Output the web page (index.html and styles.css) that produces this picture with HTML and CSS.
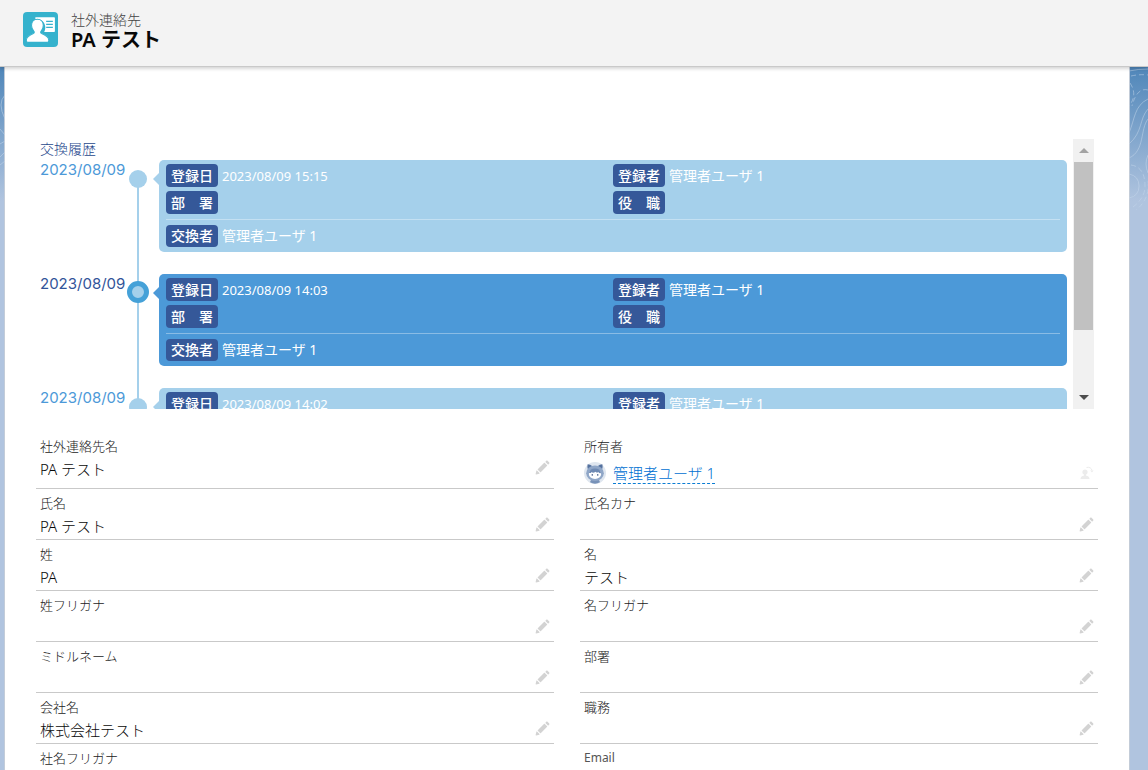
FILE: index.html
```html
<!DOCTYPE html>
<html lang="ja">
<head>
<meta charset="utf-8">
<meta name="viewport" content="width=device-width, initial-scale=1">
<title>PA テスト | 社外連絡先</title>
<link rel="stylesheet" href="styles.css">
</head>
<body>
<svg class="defs" aria-hidden="true">
  <symbol id="pencil" viewBox="0 0 52 52"><path d="M9.5 33.4l8.9 8.9c.4.4 1 .4 1.4 0L42 20c.4-.4.4-1 0-1.4l-8.8-8.8c-.4-.4-1-.4-1.4 0L9.5 32.1c-.4.4-.4 1 0 1.3zM36.1 5.7c-.4.4-.4 1 0 1.4l8.8 8.8c.4.4 1 .4 1.4 0l2.5-2.5c1.6-1.5 1.6-3.9 0-5.5l-4.7-4.7c-1.6-1.6-4.1-1.6-5.7 0l-2.3 2.5zM2.1 48.2c-.2 1 .7 1.9 1.7 1.7l10.9-2.6c.4-.1.7-.3.9-.5l.2-.2c.2-.2.3-.9-.1-1.3l-9-9c-.4-.4-1.1-.3-1.3-.1l-.2.2c-.3.3-.4.6-.5.9L2.1 48.2z"/></symbol>
</svg>
<header class="page-header">
  <svg class="record-icon" viewBox="0 0 34 34" aria-hidden="true">
    <rect width="34" height="34" rx="4" fill="#35b2cd"/>
    <path fill="#fff" d="M12 5h18c.6 0 1 .4 1 1v12.500c0 .6-.4 1-1 1h-9.500c1-2 1.500-4 1-6-.5-3.500-3-6-6.500-6.500H12z"/>
    <path stroke="#35b2cd" stroke-width="1.200" d="M22.500 9h6.500M22.500 12h6.500M22.500 15h6.500"/>
    <path fill="#fff" stroke="#35b2cd" d="M14 7c3.500 0 5.700 2.700 5.700 6.200 0 2.300-.9 4.200-2.200 5.600-.6.700-.4 1.800.6 2.200 3.600 1.500 6.900 3 7 6.500.1 1.200-.8 2-2 2H5.200c-1.200 0-2.100-.8-2-2 .2-3.500 3.300-5 6.800-6.500 1-.4 1.200-1.500.6-2.200-1.300-1.400-2.300-3.300-2.300-5.600C8.300 9.700 10.500 7 14 7z"/>
  </svg>
  <div>
    <p class="record-type">社外連絡先</p>
    <h1 class="record-name">PA テスト</h1>
  </div>
</header>
<div class="stage">
  <svg class="contours contours-left" viewBox="0 0 5 140" aria-hidden="true">
    <path d="M5 28q-8 8 0 24M0 62l5 6M0 77l5-3M0 90l5-5M0 98l5-4"/>
  </svg>
  <svg class="contours contours-right" viewBox="0 0 19 150" aria-hidden="true">
    <path d="M0 4q9-2 19-2M0 66C6 52 5 39 19 32M0 77C14 65 10 52 19 42M0 91C16 84 11 62 19 52M0 107q10 2 10 12t-10 12M19 88q-4 9 0 18"/>
    <path stroke-dasharray="5 3" d="M2 9q9-2 17-1M1 16q8 12-1 23M19 23Q8 20 3 39M2 98q14 2 14 21 0 12-12 21M19 114q2 18-12 29"/>
  </svg>
  <main class="record">
    <section class="history" aria-label="交換履歴">
      <div class="history-view">
        <h2 class="history-title">交換履歴</h2>
        <ol class="timeline">
          <li class="event">
            <time class="event-date">2023/08/09</time><span class="rail"><span class="dot"></span></span>
            <article class="card">
              <div class="card-grid">
                <p class="pair"><span class="tag">登録日</span><span class="stamp">2023/08/09 15:15</span></p>
                <p class="pair"><span class="tag">登録者</span><span>管理者ユーザ 1</span></p>
                <p class="pair"><span class="tag">部　署</span></p>
                <p class="pair"><span class="tag">役　職</span></p>
              </div>
              <p class="pair exchanged"><span class="tag">交換者</span><span>管理者ユーザ 1</span></p>
            </article>
          </li>
          <li class="event event-active">
            <time class="event-date">2023/08/09</time><span class="rail"><span class="dot"></span></span>
            <article class="card">
              <div class="card-grid">
                <p class="pair"><span class="tag">登録日</span><span class="stamp">2023/08/09 14:03</span></p>
                <p class="pair"><span class="tag">登録者</span><span>管理者ユーザ 1</span></p>
                <p class="pair"><span class="tag">部　署</span></p>
                <p class="pair"><span class="tag">役　職</span></p>
              </div>
              <p class="pair exchanged"><span class="tag">交換者</span><span>管理者ユーザ 1</span></p>
            </article>
          </li>
          <li class="event">
            <time class="event-date">2023/08/09</time><span class="rail"><span class="dot"></span></span>
            <article class="card">
              <div class="card-grid">
                <p class="pair"><span class="tag">登録日</span><span class="stamp">2023/08/09 14:02</span></p>
                <p class="pair"><span class="tag">登録者</span><span>管理者ユーザ 1</span></p>
              </div>
            </article>
          </li>
        </ol>
      </div>
      <div class="scrollbar" aria-hidden="true">
        <span class="arrow arrow-up"></span>
        <span class="track"><span class="thumb"></span></span>
        <span class="arrow arrow-down"></span>
      </div>
    </section>
    <dl class="fields">
      <div class="field field-tall"><dt>社外連絡先名</dt><dd><span>PA テスト</span><button class="edit" aria-label="社外連絡先名を編集"><svg><use href="#pencil"/></svg></button></dd></div>
      <div class="field field-tall"><dt>所有者</dt><dd class="owner">
        <svg class="avatar" viewBox="0 0 20 20" aria-hidden="true">
          <circle cx="10" cy="10" r="10" fill="#dfe6ef"/>
          <path fill="#7892b8" d="M5.500 18.500Q6 15 10 15t4.500 3.500Q10 21 5.500 18.500z"/>
          <path fill="#54719e" d="M3.300 2q2.500 0 4 1.700h5.400Q14.200 2 16.700 2q.6 2.500-.3 5H3.600q-.9-2.500-.3-5z"/>
          <ellipse cx="10" cy="10.200" rx="8" ry="7" fill="#8fa6c7"/>
          <ellipse cx="10" cy="11" rx="5.600" ry="4.500" fill="#fff"/>
          <path fill="#6f8ab3" d="M4.500 10q1-4 5.500-4t5.500 4q-1.500.5-2.500-1-1 1.300-2.500-.2Q8 10.500 7 9q-1 1.400-2.500 1z"/>
          <path stroke="#46608b" d="M7.500 11v1.500M12.500 11v1.500"/>
        </svg>
        <a class="owner-link" href="#owner">管理者ユーザ 1</a>
        <button class="edit edit-owner" aria-label="所有者の変更"><svg viewBox="0 0 14 14"><circle cx="5" cy="6" r="2.600"/><path d="M4 7h2v2.500q3.500.7 3.500 3.500h-9Q.5 10.200 4 9.500z"/><path class="swap" d="M6.500 1.500Q11 .500 12 4.500"/><path d="M10.200 4.500h3.400L12 6.600z"/></svg></button></dd></div>
      <div class="field"><dt>氏名</dt><dd><span>PA テスト</span><button class="edit" aria-label="氏名を編集"><svg><use href="#pencil"/></svg></button></dd></div>
      <div class="field"><dt>氏名カナ</dt><dd><button class="edit" aria-label="氏名カナを編集"><svg><use href="#pencil"/></svg></button></dd></div>
      <div class="field"><dt>姓</dt><dd><span>PA</span><button class="edit" aria-label="姓を編集"><svg><use href="#pencil"/></svg></button></dd></div>
      <div class="field"><dt>名</dt><dd><span>テスト</span><button class="edit" aria-label="名を編集"><svg><use href="#pencil"/></svg></button></dd></div>
      <div class="field"><dt>姓フリガナ</dt><dd><button class="edit" aria-label="姓フリガナを編集"><svg><use href="#pencil"/></svg></button></dd></div>
      <div class="field"><dt>名フリガナ</dt><dd><button class="edit" aria-label="名フリガナを編集"><svg><use href="#pencil"/></svg></button></dd></div>
      <div class="field"><dt>ミドルネーム</dt><dd><button class="edit" aria-label="ミドルネームを編集"><svg><use href="#pencil"/></svg></button></dd></div>
      <div class="field"><dt>部署</dt><dd><button class="edit" aria-label="部署を編集"><svg><use href="#pencil"/></svg></button></dd></div>
      <div class="field"><dt>会社名</dt><dd><span>株式会社テスト</span><button class="edit" aria-label="会社名を編集"><svg><use href="#pencil"/></svg></button></dd></div>
      <div class="field"><dt>職務</dt><dd><button class="edit" aria-label="職務を編集"><svg><use href="#pencil"/></svg></button></dd></div>
      <div class="field"><dt>社名フリガナ</dt><dd><button class="edit" aria-label="社名フリガナを編集"><svg><use href="#pencil"/></svg></button></dd></div>
      <div class="field"><dt class="latin">Email</dt><dd><button class="edit" aria-label="Emailを編集"><svg><use href="#pencil"/></svg></button></dd></div>
    </dl>
  </main>
</div>
</body>
</html>
```

FILE: styles.css
```css
* { box-sizing: border-box; }

html { height: 100%; overflow: hidden; }

body {
  margin: 0;
  height: 100%;
  overflow: hidden;
  display: flex;
  flex-direction: column;
  background: #b0c4df;
  color: #080808;
  font-family: "Noto Sans", "Noto Sans CJK JP", sans-serif;
  font-size: 15px;
  font-weight: 300;
}

h1, h2, p, ol, dl, dd { margin: 0; padding: 0; }

.defs { display: none; }

.page-header {
  position: relative;
  z-index: 1;
  flex: none;
  display: flex;
  align-items: center;
  gap: 13px;
  padding: 10px 23px 17px;
  background: #f3f3f3;
  border-bottom: 1px solid #c9c9c9;
  box-shadow: 0 2px 3px rgba(0, 0, 0, 0.16);
}

.page-header > div { min-width: 0; }
.record-icon { width: 35px; height: 35px; }
.record-type { font-size: 14px; line-height: 20px; color: #444; }
.record-name { font-size: 20px; line-height: 19px; font-weight: 600; }

.stage {
  position: relative;
  flex: 1;
  min-height: 0;
  padding: 0 19px 0 5px;
  background: linear-gradient(#4f86b9, #b0c4df 134px);
}

.contours {
  position: absolute;
  top: 0;
  fill: none;
  stroke: #c5d8ec;
  stroke-opacity: 0.5;
}
.contours-left { left: 0; width: 5px; height: 140px; }
.contours-right { right: 0; width: 19px; height: 150px; }

.record {
  min-height: 100%;
  padding: 72px 31px 0;
  background: #fff;
  box-shadow: 0 0 0 1px #c3ccd8;
}

.history {
  display: flex;
  gap: 6px;
  height: 270px;
  margin: 0 4px;
}

.history-view { flex: 1; overflow: hidden; }

.history-title {
  padding-bottom: 2px;
  font-size: 14px;
  line-height: 19px;
  font-weight: 300;
  color: #26478c;
}

.timeline { list-style: none; }

.event {
  display: grid;
  grid-template-columns: 85px 25px 1fr;
}

.event-date {
  color: #4c99d8;
  font-family: Inter, "Noto Sans", sans-serif;
  font-size: 15px;
  font-weight: 400;
  line-height: 19px;
}
.event-active .event-date { color: #325499; }

.rail {
  display: flex;
  justify-content: center;
  padding-top: 10px;
  background: linear-gradient(#a5d0eb, #a5d0eb) 12px 0 / 2px 100% no-repeat;
}
.event:first-child .rail { background-position: 12px 12px; }

.dot { width: 18px; height: 18px; border-radius: 50%; background: #a5d0eb; }
.event-active .rail { padding-top: 7px; }
.event-active .dot { width: 22px; height: 22px; border: 5px solid #45a1d8; }

.card {
  position: relative;
  height: 92px;
  margin: 0 0 22px 9px;
  padding: 4px 7px;
  border-radius: 5px;
  background: #a5d0eb;
  color: #fff;
  font-size: 14px;
  font-weight: 400;
}
.event-active .card { background: #4c99d8; }

.card::before {
  content: "";
  position: absolute;
  top: 13px;
  left: -6px;
  border: 6px solid transparent;
  border-left-width: 0;
  border-right-color: #a5d0eb;
}
.event-active .card::before { border-right-color: #4c99d8; }

.card-grid {
  display: grid;
  grid-template-columns: 1fr 1fr;
  row-gap: 3px;
  padding-bottom: 5px;
  border-bottom: 1px solid rgba(255, 255, 255, 0.35);
}

.pair { display: flex; align-items: baseline; gap: 4px; line-height: 23px; }
.stamp { font-size: 13px; }
.exchanged { margin-top: 5px; line-height: 22px; }

.tag {
  padding: 0 5px;
  border-radius: 4px;
  background: #355899;
  font-weight: 500;
}

.scrollbar {
  flex: none;
  display: flex;
  flex-direction: column;
  width: 21px;
  background: #f1f1f1;
}
.arrow { display: flex; align-items: center; justify-content: center; height: 23px; }
.arrow::before { content: ""; border: 5px solid transparent; }
.arrow-up::before { border-top: 0; border-bottom-color: #a3a3a3; }
.arrow-down::before { border-bottom: 0; border-top-color: #4d4d4d; }
.track { flex: 1; padding: 0 1px; }
.thumb { display: block; height: 75%; background: #c1c1c1; }

.fields {
  display: grid;
  grid-template-columns: 1fr 1fr;
  column-gap: 26px;
  margin-top: 27px;
}

.field {
  min-height: 51px;
  padding: 4px 4px 0;
  border-bottom: 1px solid #c9c9c9;
}
.field-tall { min-height: 53px; padding-top: 0; }

.field dt { font-size: 13px; line-height: 20px; color: #222; }
.field dt.latin { font-size: 12px; font-weight: 400; color: #555; }

.field dd { display: flex; align-items: center; min-height: 26px; line-height: 26px; }

.owner { gap: 7px; }
.field .owner { padding-top: 6px; }
.avatar { width: 22px; height: 22px; }
.owner-link {
  color: #0070d2;
  line-height: 20px;
  text-decoration: none;
  border-bottom: 1px dashed #0b7dd4;
}

.edit {
  display: flex;
  margin-left: auto;
  padding: 0 0 4px;
  border: 0;
  background: none;
}
.edit svg { width: 15px; height: 15px; fill: #d3d3d3; }
.edit-owner { padding: 0; }
.edit-owner svg { width: 14px; height: 14px; fill: #ececec; }
.edit-owner .swap { fill: none; stroke: #ececec; }
```
